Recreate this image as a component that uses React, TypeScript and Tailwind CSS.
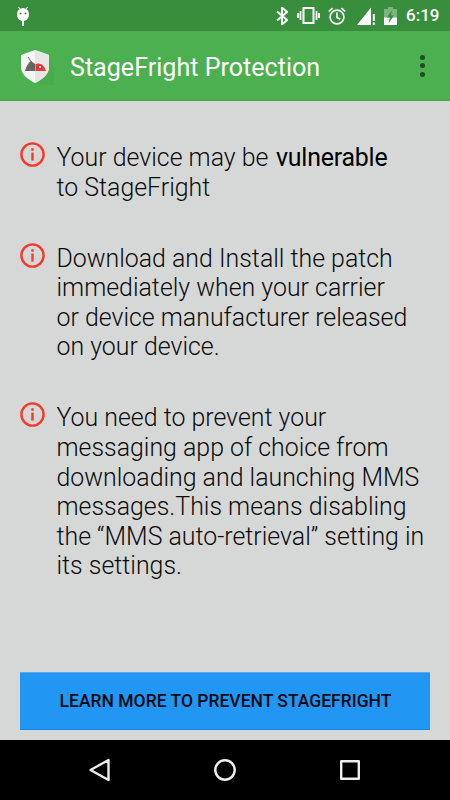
const Info = () => (
  <svg width="25" height="25" viewBox="0 0 25 25" className="shrink-0" fill="none">
    <circle cx="12.5" cy="12.5" r="11.1" stroke="#f5392c" strokeWidth="2.400" />
    <rect x="11.3" y="6.2" width="2.4" height="2.6" fill="#f5392c" />
    <rect x="11.3" y="10.6" width="2.4" height="8" fill="#f5392c" />
  </svg>
);

const Row = ({ children }: { children: React.ReactNode }) => (
  <div className="flex gap-[11.500px]">
    <Info />
    <p className="text-[24.900px] leading-[29.6px] font-light text-[#0c0c0c] pt-[1px]">{children}</p>
  </div>
);

export default function App() {
  return (
    <div className="w-[450px] h-[800px] flex flex-col bg-[#d6d8d7] overflow-hidden font-['Roboto',sans-serif]">
      <div className="h-[31px] bg-[#388e3c] flex items-center text-white shrink-0">
        <svg width="14" height="20" viewBox="0 0 14 20" className="ml-[16px]" fill="#fff">
          <path d="M1 8a6 6 0 0 1 12 0v1a6 6 0 0 1-12 0z" />
          <path d="M2.5 1l2 3M11.5 1l-2 3" stroke="#fff" strokeWidth="1" />
          <rect x="6" y="14" width="2" height="6" />
          <circle cx="4.5" cy="7.5" r="1" fill="#388e3c" />
          <circle cx="9.5" cy="7.5" r="1" fill="#388e3c" />
        </svg>
        <div className="ml-auto flex items-center pr-[10px]">
          <svg width="12" height="18" viewBox="0 0 12 18" fill="none" stroke="#fff" strokeWidth="1.9" className="mr-[9px]">
            <path d="M1 4.5L11 13 6 17.500V.5l5 4.500L1 13.500" />
          </svg>
          <svg width="23" height="17" viewBox="0 0 23 17" fill="none" stroke="#fff" className="mr-[8px]">
            <rect x="6.500" y="1" width="10" height="15" strokeWidth="2" />
            <path d="M3.500 4v9M1 6v5M19.500 4v9M22 6v5" strokeWidth="1.800" />
          </svg>
          <svg width="18" height="18" viewBox="0 0 18 18" fill="none" stroke="#fff" strokeWidth="1.6" className="mr-[11px]">
            <circle cx="9" cy="10" r="6.900" />
            <path d="M9 5.500v5l3.300 1.800M.8 4.500L4.500 1.200M17.200 4.500L13.500 1.200" />
          </svg>
          <svg width="18" height="18" viewBox="0 0 18 18" className="mr-[9px]">
            <path d="M0 18L14 .5V18z" fill="#fff" />
            <rect x="15.800" y="7" width="2" height="7" fill="#fff" />
            <rect x="15.800" y="15.500" width="2" height="2.500" fill="#fff" />
          </svg>
          <svg width="13" height="18" viewBox="0 0 13 18" className="mr-[9px]">
            <path d="M4 0h5v2h4v16H0V2h4z" fill="#fff" fillOpacity="0.35" />
            <path d="M0 10.500h13V18H0z" fill="#fff" />
            <path d="M8 3L3 10.500h3l-1.500 6L10 8.500H7z" fill="#388e3c" />
          </svg>
          <span className="text-[17px] font-medium leading-none w-[34px] whitespace-nowrap">6:19</span>
        </div>
      </div>
      <div className="h-[70px] bg-[#4caf50] border-b border-[#43a847] flex items-center shrink-0">
        <svg width="36" height="42" viewBox="0 0 36 42" className="ml-[20px] mt-[9px] -mr-[6px]">
          <path d="M29 12L34 17V36H26L15 34z" fill="#4aab4e" />
          <path d="M15 1l14 5v12c0 7-6 12-14 16C7 30 1 25 1 18V6z" fill="#f5f5f5" />
          <path d="M15 34V1l14 5v12c0 7-6 12-14 16z" fill="#e6e6e6" />
          <path d="M5 22c1-4 3-8 6-10l4 3v7z" fill="#666" />
          <path d="M8 8l4 6" stroke="#666" strokeWidth="1" />
          <path d="M15.500 22v-7c5-2 9 2 10.500 7z" fill="#e53935" />
          <circle cx="20" cy="18" r="1" fill="#fff" />
        </svg>
        <span className="ml-[20px] mt-[4px] text-white text-[25.100px] whitespace-nowrap">StageFright Protection</span>
        <div className="ml-auto mr-[25px] flex flex-col gap-[3.500px]">
          <span className="w-[5px] h-[5px] rounded-full bg-[#1f4d22]" />
          <span className="w-[5px] h-[5px] rounded-full bg-[#1f4d22]" />
          <span className="w-[5px] h-[5px] rounded-full bg-[#1f4d22]" />
        </div>
      </div>
      <div className="flex-1 flex flex-col px-[20px] pt-[41px] pb-[10px]">
        <div className="flex flex-col gap-[40.400px]">
          <Row>Your device may be <span className="font-normal text-black ml-[1.500px] tracking-[-0.200px]">vulnerable</span><br />to StageFright</Row>
          <Row>Download and Install the patch<br />immediately when your carrier<br />or device manufacturer released<br />on your device.</Row>
          <Row>You need to prevent your<br />messaging app of choice from<br />downloading and launching MMS<br />messages.This means disabling<br />the “MMS auto-retrieval” setting in<br />its settings.</Row>
        </div>
        <button className="mt-auto h-[58px] pt-[1px] pl-[1px] bg-[#2196f3] border-t border-[#5aa9ec] border-b border-b-[#1a88e0] text-[#0a0a14] text-[17.500px] font-medium flex items-center justify-center">LEARN MORE TO PREVENT STAGEFRIGHT</button>
      </div>
      <div className="h-[60px] bg-black flex items-center justify-center shrink-0">
        <div className="w-[274px] flex items-center justify-between">
          <svg width="24" height="24" viewBox="0 0 24 24" fill="none" stroke="#eee" strokeWidth="2.400" strokeLinejoin="round"><path d="M20.500 2v20L2.500 12z" /></svg>
          <svg width="24" height="24" viewBox="0 0 24 24" fill="none" stroke="#eee" strokeWidth="2.400"><circle cx="12" cy="12" r="9.700" /></svg>
          <svg width="24" height="24" viewBox="0 0 24 24" fill="none" stroke="#eee" strokeWidth="2.400" strokeLinejoin="round"><rect x="3.200" y="3.200" width="17.600" height="17.600" /></svg>
        </div>
      </div>
    </div>
  );
}
